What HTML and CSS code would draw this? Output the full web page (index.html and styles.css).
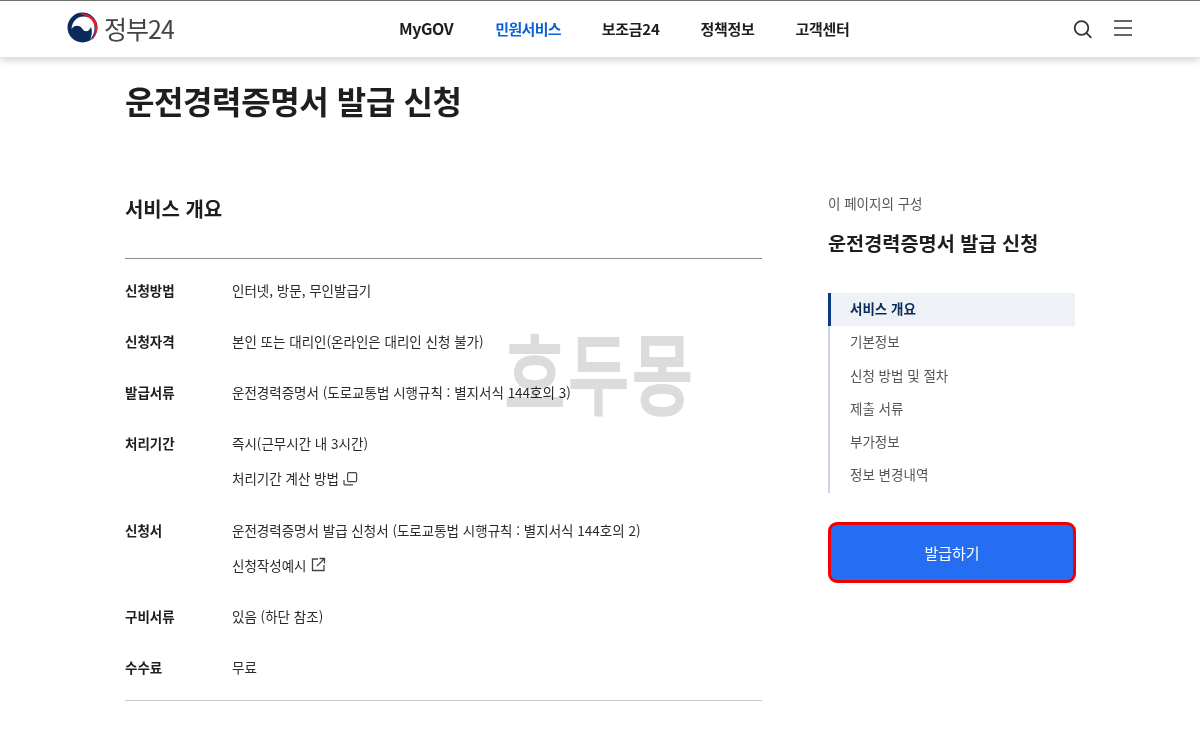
FILE: index.html
```html
<!DOCTYPE html>
<html lang="ko">
<head>
<meta charset="utf-8">
<title>운전경력증명서 발급 신청</title>
<link rel="stylesheet" href="styles.css">
</head>
<body>
<header class="header">
  <a class="logo">
    <svg class="logo-mark" width="32" height="32" viewBox="0 0 32 32">
      <circle cx="15.500" cy="15.500" r="15" fill="#0b2a5c"/>
      <path d="M12 0C19-1 28 3 30.500 10.500C32.500 17 30 24.500 24 29L32 32V0z" fill="#fff"/>
      <path d="M12 1.800C19 .4 27 4 29.500 11C31.500 17 29.500 24 24.500 28.500C28 23 29 17 27 12C24.500 6.500 18 3 12 1.800z" fill="#e01e37"/>
      <path d="M4.500 17C5 9 10.500 4.500 16.500 4.500C23.500 4.500 28 10.500 27.500 17C27.300 21 25.500 25 23 28C25 23.500 25.500 19 24 15C22 20 18 20.500 15.500 17C13 13 7.500 12.500 4.500 17z" fill="#fff"/>
    </svg>
    <span class="logo-text">정부24</span>
  </a>
  <nav class="gnb">
    <a class="latin">MyGOV</a>
    <a class="on">민원서비스</a>
    <a>보조금24</a>
    <a>정책정보</a>
    <a>고객센터</a>
  </nav>
  <div class="tools">
    <svg class="search" width="20" height="20" viewBox="0 0 20 20" fill="none" stroke="#333" stroke-width="1.800"><circle cx="8.500" cy="8" r="6.800"/><path d="M13.300 12.800L17.800 17.300" stroke-linecap="round"/></svg>
    <svg class="burger" width="18" height="16" viewBox="0 0 18 16" fill="none" stroke="#333" stroke-width="1.700"><path d="M0 1h18M0 8h18M0 15h18"/></svg>
  </div>
</header>

<main class="page">
  <h1 class="title">운전경력증명서 발급 신청</h1>
  <div class="columns">
    <section class="content">
      <h2 class="section-title">서비스 개요</h2>
      <dl class="info">
        <div class="row"><dt>신청방법</dt><dd><p>인터넷, 방문, 무인발급기</p></dd></div>
        <div class="row"><dt>신청자격</dt><dd><p>본인 또는 대리인(온라인은 대리인 신청 불가)</p></dd></div>
        <div class="row"><dt>발급서류</dt><dd><p>운전경력증명서 (도로교통법 시행규칙 : 별지서식 144호의 3)</p></dd></div>
        <div class="row"><dt>처리기간</dt><dd><p>즉시(근무시간 내 3시간)</p>
          <p class="link">처리기간 계산 방법
            <svg width="15" height="15" viewBox="0 0 15 15" fill="none" stroke="#444" stroke-width="1.200"><rect x="4.600" y="1.600" width="9" height="9" rx="1.200"/><path d="M1 9v4a.8.800 0 0 0 .8.8h8.200"/></svg></p></dd></div>
        <div class="row"><dt>신청서</dt><dd><p>운전경력증명서 발급 신청서 (도로교통법 시행규칙 : 별지서식 144호의 2)</p>
          <p class="link">신청작성예시
            <svg width="15" height="15" viewBox="0 0 15 15" fill="none" stroke="#444" stroke-width="1.300"><path d="M7 2H1.500v11.500H13V8"/><path d="M6 9l7.500-7.500M8.500 1.500H13.500v5"/></svg></p></dd></div>
        <div class="row"><dt>구비서류</dt><dd><p>있음 (하단 참조)</p></dd></div>
        <div class="row"><dt>수수료</dt><dd><p>무료</p></dd></div>
      </dl>
    </section>
    <aside class="side">
      <p class="side-label">이 페이지의 구성</p>
      <h2 class="side-title">운전경력증명서 발급 신청</h2>
      <ul class="toc">
        <li class="on">서비스 개요</li>
        <li>기본정보</li>
        <li>신청 방법 및 절차</li>
        <li>제출 서류</li>
        <li>부가정보</li>
        <li>정보 변경내역</li>
      </ul>
      <button class="apply">발급하기</button>
    </aside>
  </div>
</main>
<div class="watermark">호두몽</div>
</body>
</html>
```

FILE: styles.css
```css
* { box-sizing: border-box; }
html, body { margin: 0; padding: 0; height: 750px; overflow: hidden; background: #fff; }
body { font-family: "Noto Sans CJK KR", "Noto Sans", sans-serif; color: #1e1e1e; position: relative; }
p, h1, h2, ul, dl, dd { margin: 0; padding: 0; }

.header {
  height: 57px;
  border-top: 1px solid #707070;
  display: flex;
  align-items: center;
  padding: 0 68px 2px 67px;
  box-shadow: 0 3px 8px rgba(0, 0, 0, .18);
  background: #fff;
}
.logo { display: flex; align-items: center; gap: 5px; width: 332px; }
.logo-mark { flex: none; }
.logo-text { font-size: 25px; color: #444; letter-spacing: -1px; line-height: 1; }
.gnb { display: flex; gap: 41px; font-size: 15px; font-weight: 700; color: #1e1e1e; letter-spacing: -.3px; }
.gnb .latin { font-size: 16px; line-height: 21px; letter-spacing: -.4px; margin-right: 1px; }
.gnb .on { color: #0b62d6; letter-spacing: -.7px; }
.tools { margin-left: auto; display: flex; align-items: center; gap: 21px; }
.search { margin-top: 4px; }

.page { padding: 19px 125px 0; }
.title { font-size: 32px; font-weight: 700; line-height: 48px; letter-spacing: -.4px; }
.columns { display: flex; justify-content: space-between; margin-top: 70px; }

.content { width: 637px; }
.section-title { font-size: 20px; font-weight: 700; line-height: 30px; padding-bottom: 34px; border-bottom: 1px solid #8a8a8a; letter-spacing: -.1px; }
.info { padding: 5.300px 0 7.100px; border-bottom: 1px solid #c8c8c8; }
.row { display: flex; font-size: 13.500px; line-height: 20px; padding: 15.600px 0; }
.row dt { width: 107px; font-weight: 700; }
.row dd { color: #2a2a2a; }
.link { display: flex; align-items: center; gap: 4px; margin-top: 15px; }

.side { width: 248px; margin-right: -1px; margin-top: -1px; flex: none; }
.side-label { font-size: 13.500px; line-height: 20px; color: #555; }
.side-title { font-size: 19.700px; font-weight: 700; line-height: 30px; margin-top: 15px; }
.toc { list-style: none; margin-top: 35px; border-left: 2px solid #ccd5e3; width: 247px; }
.toc li { height: 33.300px; line-height: 31px; padding-left: 20px; font-size: 13.500px; color: #555; }
.toc .on { background: #eef2f6; color: #0b2a5c; font-weight: 700; border-left: 3px solid #0b3a82; margin-left: -2px; padding-left: 19px; }
.apply {
  display: block; width: 248px; height: 61px; margin-top: 29px;
  background: #256ef1; color: #fff; border: 3px solid #f00000; border-radius: 9px;
  font: 400 15px "Noto Sans CJK KR", sans-serif;
}

.watermark {
  position: absolute; left: 505px; top: 325px;
  font-size: 65px; line-height: 66px; font-weight: 400; color: #dcdcdc;
  -webkit-text-stroke: 3px #dcdcdc;
  letter-spacing: 4px; pointer-events: none;
  mix-blend-mode: multiply;
  transform: scaleY(1.35); transform-origin: 0 0;
}
```
